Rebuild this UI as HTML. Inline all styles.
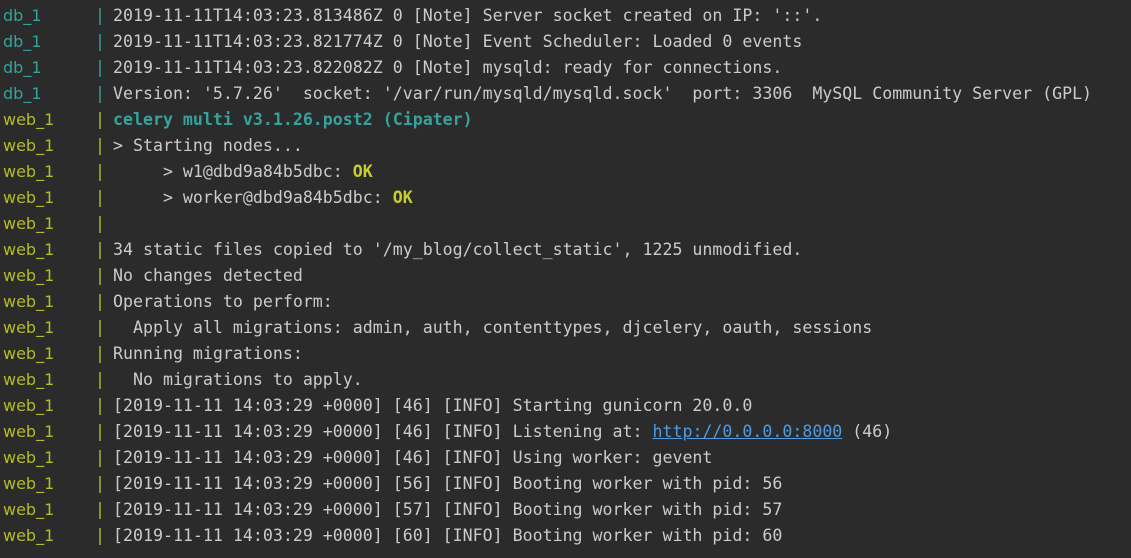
<!DOCTYPE html>
<html><head><style>
body{margin:0;background:#2b2b2b;width:1131px;height:558px;overflow:hidden;}
.r{position:absolute;left:0;height:26px;line-height:26px;white-space:pre;font-size:16.6px;color:#cbcbcb;}
.p{position:absolute;left:3px;font-family:"DejaVu Sans","Liberation Sans",sans-serif;font-size:16px;}
.b{position:absolute;left:95px;font-family:"DejaVu Sans Mono",monospace;}
.t{position:absolute;left:113px;font-family:"DejaVu Sans Mono",monospace;}
.d{color:#35a39c}.w{color:#b3bb2a}
.c{color:#35a39c;font-weight:bold}.ok{color:#c6cf2e;font-weight:bold}
a{color:#4f9be0;text-decoration:underline}
</style></head><body>
<div class="r" style="top:3px"><span class="p d">db_1</span><span class="b d">|</span><span class="t">2019-11-11T14:03:23.813486Z 0 [Note] Server socket created on IP: '::'.</span></div>
<div class="r" style="top:29px"><span class="p d">db_1</span><span class="b d">|</span><span class="t">2019-11-11T14:03:23.821774Z 0 [Note] Event Scheduler: Loaded 0 events</span></div>
<div class="r" style="top:55px"><span class="p d">db_1</span><span class="b d">|</span><span class="t">2019-11-11T14:03:23.822082Z 0 [Note] mysqld: ready for connections.</span></div>
<div class="r" style="top:81px"><span class="p d">db_1</span><span class="b d">|</span><span class="t">Version: '5.7.26'  socket: '/var/run/mysqld/mysqld.sock'  port: 3306  MySQL Community Server (GPL)</span></div>
<div class="r" style="top:107px"><span class="p w">web_1</span><span class="b w">|</span><span class="t c">celery multi v3.1.26.post2 (Cipater)</span></div>
<div class="r" style="top:133px"><span class="p w">web_1</span><span class="b w">|</span><span class="t">&gt; Starting nodes...</span></div>
<div class="r" style="top:159px"><span class="p w">web_1</span><span class="b w">|</span><span class="t">     &gt; w1@dbd9a84b5dbc: <span class="ok">OK</span></span></div>
<div class="r" style="top:185px"><span class="p w">web_1</span><span class="b w">|</span><span class="t">     &gt; worker@dbd9a84b5dbc: <span class="ok">OK</span></span></div>
<div class="r" style="top:211px"><span class="p w">web_1</span><span class="b w">|</span></div>
<div class="r" style="top:237px"><span class="p w">web_1</span><span class="b w">|</span><span class="t">34 static files copied to '/my_blog/collect_static', 1225 unmodified.</span></div>
<div class="r" style="top:263px"><span class="p w">web_1</span><span class="b w">|</span><span class="t">No changes detected</span></div>
<div class="r" style="top:289px"><span class="p w">web_1</span><span class="b w">|</span><span class="t">Operations to perform:</span></div>
<div class="r" style="top:315px"><span class="p w">web_1</span><span class="b w">|</span><span class="t">  Apply all migrations: admin, auth, contenttypes, djcelery, oauth, sessions</span></div>
<div class="r" style="top:341px"><span class="p w">web_1</span><span class="b w">|</span><span class="t">Running migrations:</span></div>
<div class="r" style="top:367px"><span class="p w">web_1</span><span class="b w">|</span><span class="t">  No migrations to apply.</span></div>
<div class="r" style="top:393px"><span class="p w">web_1</span><span class="b w">|</span><span class="t">[2019-11-11 14:03:29 +0000] [46] [INFO] Starting gunicorn 20.0.0</span></div>
<div class="r" style="top:419px"><span class="p w">web_1</span><span class="b w">|</span><span class="t">[2019-11-11 14:03:29 +0000] [46] [INFO] Listening at: <a>http://0.0.0.0:8000</a> (46)</span></div>
<div class="r" style="top:445px"><span class="p w">web_1</span><span class="b w">|</span><span class="t">[2019-11-11 14:03:29 +0000] [46] [INFO] Using worker: gevent</span></div>
<div class="r" style="top:471px"><span class="p w">web_1</span><span class="b w">|</span><span class="t">[2019-11-11 14:03:29 +0000] [56] [INFO] Booting worker with pid: 56</span></div>
<div class="r" style="top:497px"><span class="p w">web_1</span><span class="b w">|</span><span class="t">[2019-11-11 14:03:29 +0000] [57] [INFO] Booting worker with pid: 57</span></div>
<div class="r" style="top:523px"><span class="p w">web_1</span><span class="b w">|</span><span class="t">[2019-11-11 14:03:29 +0000] [60] [INFO] Booting worker with pid: 60</span></div>
</body></html>
